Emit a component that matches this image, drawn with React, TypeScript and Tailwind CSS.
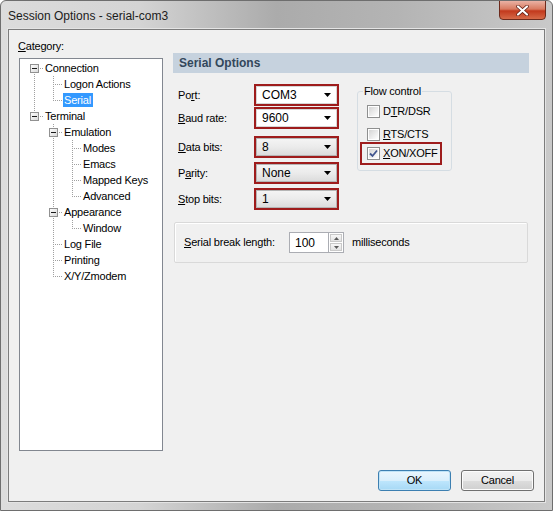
import React from "react";

type Cell = "blank" | "v" | "t" | "l" | { up: boolean; down: boolean };

const LINE = "#a0a0a0";

const TreeCell = ({ cell }: { cell: Cell }) => {
  return (
    <svg width="19" height="16" className="shrink-0" shapeRendering="crispEdges">
      {cell === "v" && (
        <line x1="9.5" y1="0" x2="9.5" y2="16" stroke={LINE} strokeDasharray="1 1" />
      )}
      {cell === "t" && (
        <>
          <line x1="9.5" y1="0" x2="9.5" y2="16" stroke={LINE} strokeDasharray="1 1" />
          <line x1="11" y1="8.5" x2="19" y2="8.5" stroke={LINE} strokeDasharray="1 1" />
        </>
      )}
      {cell === "l" && (
        <>
          <line x1="9.5" y1="0" x2="9.5" y2="9" stroke={LINE} strokeDasharray="1 1" />
          <line x1="11" y1="8.5" x2="19" y2="8.5" stroke={LINE} strokeDasharray="1 1" />
        </>
      )}
      {typeof cell === "object" && (
        <>
          {cell.up && <line x1="9.5" y1="0" x2="9.5" y2="4" stroke={LINE} strokeDasharray="1 1" />}
          {cell.down && <line x1="9.5" y1="14" x2="9.5" y2="16" stroke={LINE} strokeDasharray="1 1" />}
          <line x1="15" y1="8.5" x2="19" y2="8.5" stroke={LINE} strokeDasharray="1 1" />
          <defs>
            <linearGradient id="expg" x1="0" y1="0" x2="1" y2="1">
              <stop offset="0" stopColor="#ffffff" />
              <stop offset="1" stopColor="#d8d8d8" />
            </linearGradient>
          </defs>
          <rect x="5.5" y="4.5" width="8" height="8" fill="url(#expg)" stroke="#919191" />
          <line x1="7" y1="8.5" x2="12" y2="8.5" stroke="#1a1a1a" />
        </>
      )}
    </svg>
  );
};

const treeRows: { label: string; cells: Cell[]; selected?: boolean }[] = [
  { label: "Connection", cells: [{ up: false, down: true }] },
  { label: "Logon Actions", cells: ["v", "t"] },
  { label: "Serial", cells: ["v", "l"], selected: true },
  { label: "Terminal", cells: [{ up: true, down: false }] },
  { label: "Emulation", cells: ["blank", { up: true, down: true }] },
  { label: "Modes", cells: ["blank", "v", "t"] },
  { label: "Emacs", cells: ["blank", "v", "t"] },
  { label: "Mapped Keys", cells: ["blank", "v", "t"] },
  { label: "Advanced", cells: ["blank", "v", "l"] },
  { label: "Appearance", cells: ["blank", { up: true, down: true }] },
  { label: "Window", cells: ["blank", "v", "l"] },
  { label: "Log File", cells: ["blank", "t"] },
  { label: "Printing", cells: ["blank", "t"] },
  { label: "X/Y/Zmodem", cells: ["blank", "l"] },
];

const Arrow = () => (
  <svg width="7" height="4" viewBox="0 0 7 4" className="shrink-0">
    <path d="M0 0 H7 L3.5 4 Z" fill="#000" />
  </svg>
);

const Combo = ({ value, list }: { value: string; list?: boolean }) => (
  <div className="w-[85px] h-[22px] border-2 border-[#9e1c1c]">
    <div
      className={
        list
          ? "h-full flex items-center justify-between pl-[5px] pr-[5px] bg-[linear-gradient(180deg,#f4f4f4_0%,#ebebeb_50%,#dcdcdc_100%)] border border-[#b5b5b5]"
          : "h-full flex items-center justify-between pl-[5px] pr-[5px] bg-white border border-[#d6d6d6]"
      }
    >
      <span className="text-[12px] tracking-normal">{value}</span>
      <Arrow />
    </div>
  </div>
);

const U = ({ children }: { children: React.ReactNode }) => <span className="underline underline-offset-1">{children}</span>;

const Checkbox = ({ checked }: { checked?: boolean }) => (
  <div className="w-[13px] h-[13px] shrink-0 border border-[#8e8f8f] bg-white p-[1px]">
    <div className="w-full h-full bg-[linear-gradient(135deg,#d5d5d5_0%,#eeeeee_60%,#ffffff_100%)] flex items-center justify-center">
      {checked && (
        <svg width="9" height="9" viewBox="0 0 9 9">
          <path d="M1 4.5 L3.5 7 L8 1.5" fill="none" stroke="#42568f" strokeWidth="1.8" />
        </svg>
      )}
    </div>
  </div>
);

export default function App() {
  return (
    <div
      className="w-[553px] h-[511px] flex flex-col border border-[#6e6e6e] rounded-t-[6px] overflow-hidden text-[11px] tracking-[-0.2px] text-black bg-[linear-gradient(90deg,#dcdcdc_0%,#d4d4d4_25%,#ababab_50%,#b4b4b4_72%,#c9c9c9_100%)]"
      style={{ fontFamily: '"Liberation Sans", Arial, sans-serif' }}
    >
      {/* title bar */}
      <div className="h-[28px] flex justify-between shrink-0">
        <div className="pl-[7px] pt-[6px] text-[12px] tracking-normal text-[#1b1b1b]">Session Options - serial-com3</div>
        <div className="-mt-[1px] mr-[6px] w-[47px] h-[20px] rounded-b-[4px] border border-[#6d2a1c] bg-[linear-gradient(180deg,#eab2a4_0%,#d87a60_45%,#c2391d_55%,#d66a48_100%)] flex items-center justify-center">
          <svg width="13" height="11" viewBox="0 0 13 11">
            <path d="M2 1.5 L11 9.5 M11 1.5 L2 9.5" stroke="#5a1a10" strokeWidth="3.6" strokeLinecap="round" />
            <path d="M2 1.5 L11 9.5 M11 1.5 L2 9.5" stroke="#ffffff" strokeWidth="2.2" strokeLinecap="round" />
          </svg>
        </div>
      </div>

      {/* client area */}
      <div className="flex-1 mx-[7px] mb-[8px] border border-[#7c7c7c] bg-[#f0f0f0] shadow-[0_0_0_1px_#e4e4e4] flex flex-col">
        <div className="flex">
          {/* category */}
          <div className="pt-[8px] w-[155px] shrink-0">
            <div className="h-[20px] pl-[9px]">
              <U>C</U>ategory:
            </div>
            <div className="ml-[10px] w-[144px] h-[393px] border border-[#828790] bg-white pt-[1px] pl-[5px]">
              {treeRows.map((r) => (
                <div key={r.label} className="flex h-[16px] items-center">
                  {r.cells.map((c, i) => (
                    <TreeCell key={i} cell={c} />
                  ))}
                  <span
                    className={
                      r.selected
                        ? "h-[14px] leading-[14px] pl-[1px] pr-[2px] bg-[#3399ff] text-white"
                        : "h-[14px] leading-[14px] pl-[1px] pr-[2px]"
                    }
                  >
                    {r.label}
                  </span>
                </div>
              ))}
            </div>
          </div>

          {/* serial options */}
          <div className="ml-[9px] pt-[23px] w-[356px]">
            <div className="h-[20px] bg-[#c6d2de] pl-[6px] flex items-center font-bold text-[12px] tracking-normal text-[#33475b]">
              Serial Options
            </div>

            <div className="flex mt-[11px]">
              <div className="flex flex-col">
                <div className="flex items-center">
                  <div className="w-[81px] pl-[5px]">
                    Po<U>r</U>t:
                  </div>
                  <Combo value="COM3" />
                </div>
                <div className="flex items-center mt-[1px]">
                  <div className="w-[81px] pl-[5px]">
                    <U>B</U>aud rate:
                  </div>
                  <Combo value="9600" />
                </div>
                <div className="flex items-center mt-[7px]">
                  <div className="w-[81px] pl-[5px]">
                    <U>D</U>ata bits:
                  </div>
                  <Combo value="8" list />
                </div>
                <div className="flex items-center mt-[4px]">
                  <div className="w-[81px] pl-[5px]">
                    P<U>a</U>rity:
                  </div>
                  <Combo value="None" list />
                </div>
                <div className="flex items-center mt-[4px]">
                  <div className="w-[81px] pl-[5px]">
                    <U>S</U>top bits:
                  </div>
                  <Combo value="1" list />
                </div>
              </div>

              <fieldset className="ml-[18px] mt-[1px] w-[95px] h-[86px] border border-[#d5dde3] rounded-[3px] self-start">
                <legend className="ml-[5px] px-[1px] leading-[13px]">Flow control</legend>
                <div className="flex items-center gap-[3px] ml-[9px] mt-[6px] h-[14px]">
                  <Checkbox />
                  <span>
                    D<U>T</U>R/DSR
                  </span>
                </div>
                <div className="flex items-center gap-[3px] ml-[9px] mt-[9px] h-[14px]">
                  <Checkbox />
                  <span>
                    <U>R</U>TS/CTS
                  </span>
                </div>
                <div className="flex items-center gap-[3px] ml-[2px] mt-[1px] w-[82px] h-[23px] border-2 border-[#9e1c1c] pl-[5px]">
                  <Checkbox checked />
                  <span>
                    <U>X</U>ON/XOFF
                  </span>
                </div>
              </fieldset>
            </div>

            <div className="ml-[1px] mt-[12px] w-[354px] h-[41px] border border-[#d9d9d9] rounded-[2px] shadow-[inset_1px_1px_0_#ffffff] flex items-center pl-[9px]">
              <div className="w-[105px]">
                <U>S</U>erial break length:
              </div>
              <div className="w-[40px] h-[21px] border border-[#abadb3] bg-white flex items-center pl-[5px] text-[12px] tracking-normal">100</div>
              <div className="w-[15px] h-[21px] flex flex-col border border-l-0 border-[#abadb3] bg-white p-[1px] gap-[1px]">
                <div className="flex-1 flex items-center justify-center bg-[linear-gradient(180deg,#f7f7f7,#e3e3e3)] border border-[#c9c9c9]">
                  <svg width="5" height="3" viewBox="0 0 5 3">
                    <path d="M0 3 L2.5 0 L5 3 Z" fill="#5a5a5a" />
                  </svg>
                </div>
                <div className="flex-1 flex items-center justify-center bg-[linear-gradient(180deg,#f7f7f7,#e3e3e3)] border border-[#c9c9c9]">
                  <svg width="5" height="3" viewBox="0 0 5 3">
                    <path d="M0 0 L5 0 L2.5 3 Z" fill="#5a5a5a" />
                  </svg>
                </div>
              </div>
              <div className="ml-[8px]">milliseconds</div>
            </div>
          </div>
        </div>

        {/* buttons */}
        <div className="flex justify-end gap-[10px] pr-[10px] mt-[19px]">
          <button className="w-[73px] h-[21px] rounded-[3px] border border-[#3c7fb1] bg-[linear-gradient(180deg,#eaf6fd_0%,#d9effc_50%,#bee6fd_51%,#a7d9f5_100%)] shadow-[inset_0_0_0_1px_#bfe3f7]">
            OK
          </button>
          <button className="w-[73px] h-[21px] rounded-[3px] border border-[#707070] bg-[linear-gradient(180deg,#f2f2f2_0%,#ebebeb_50%,#dddddd_51%,#cfcfcf_100%)] shadow-[inset_0_0_0_1px_#fcfcfc]">
            Cancel
          </button>
        </div>
      </div>
    </div>
  );
}
